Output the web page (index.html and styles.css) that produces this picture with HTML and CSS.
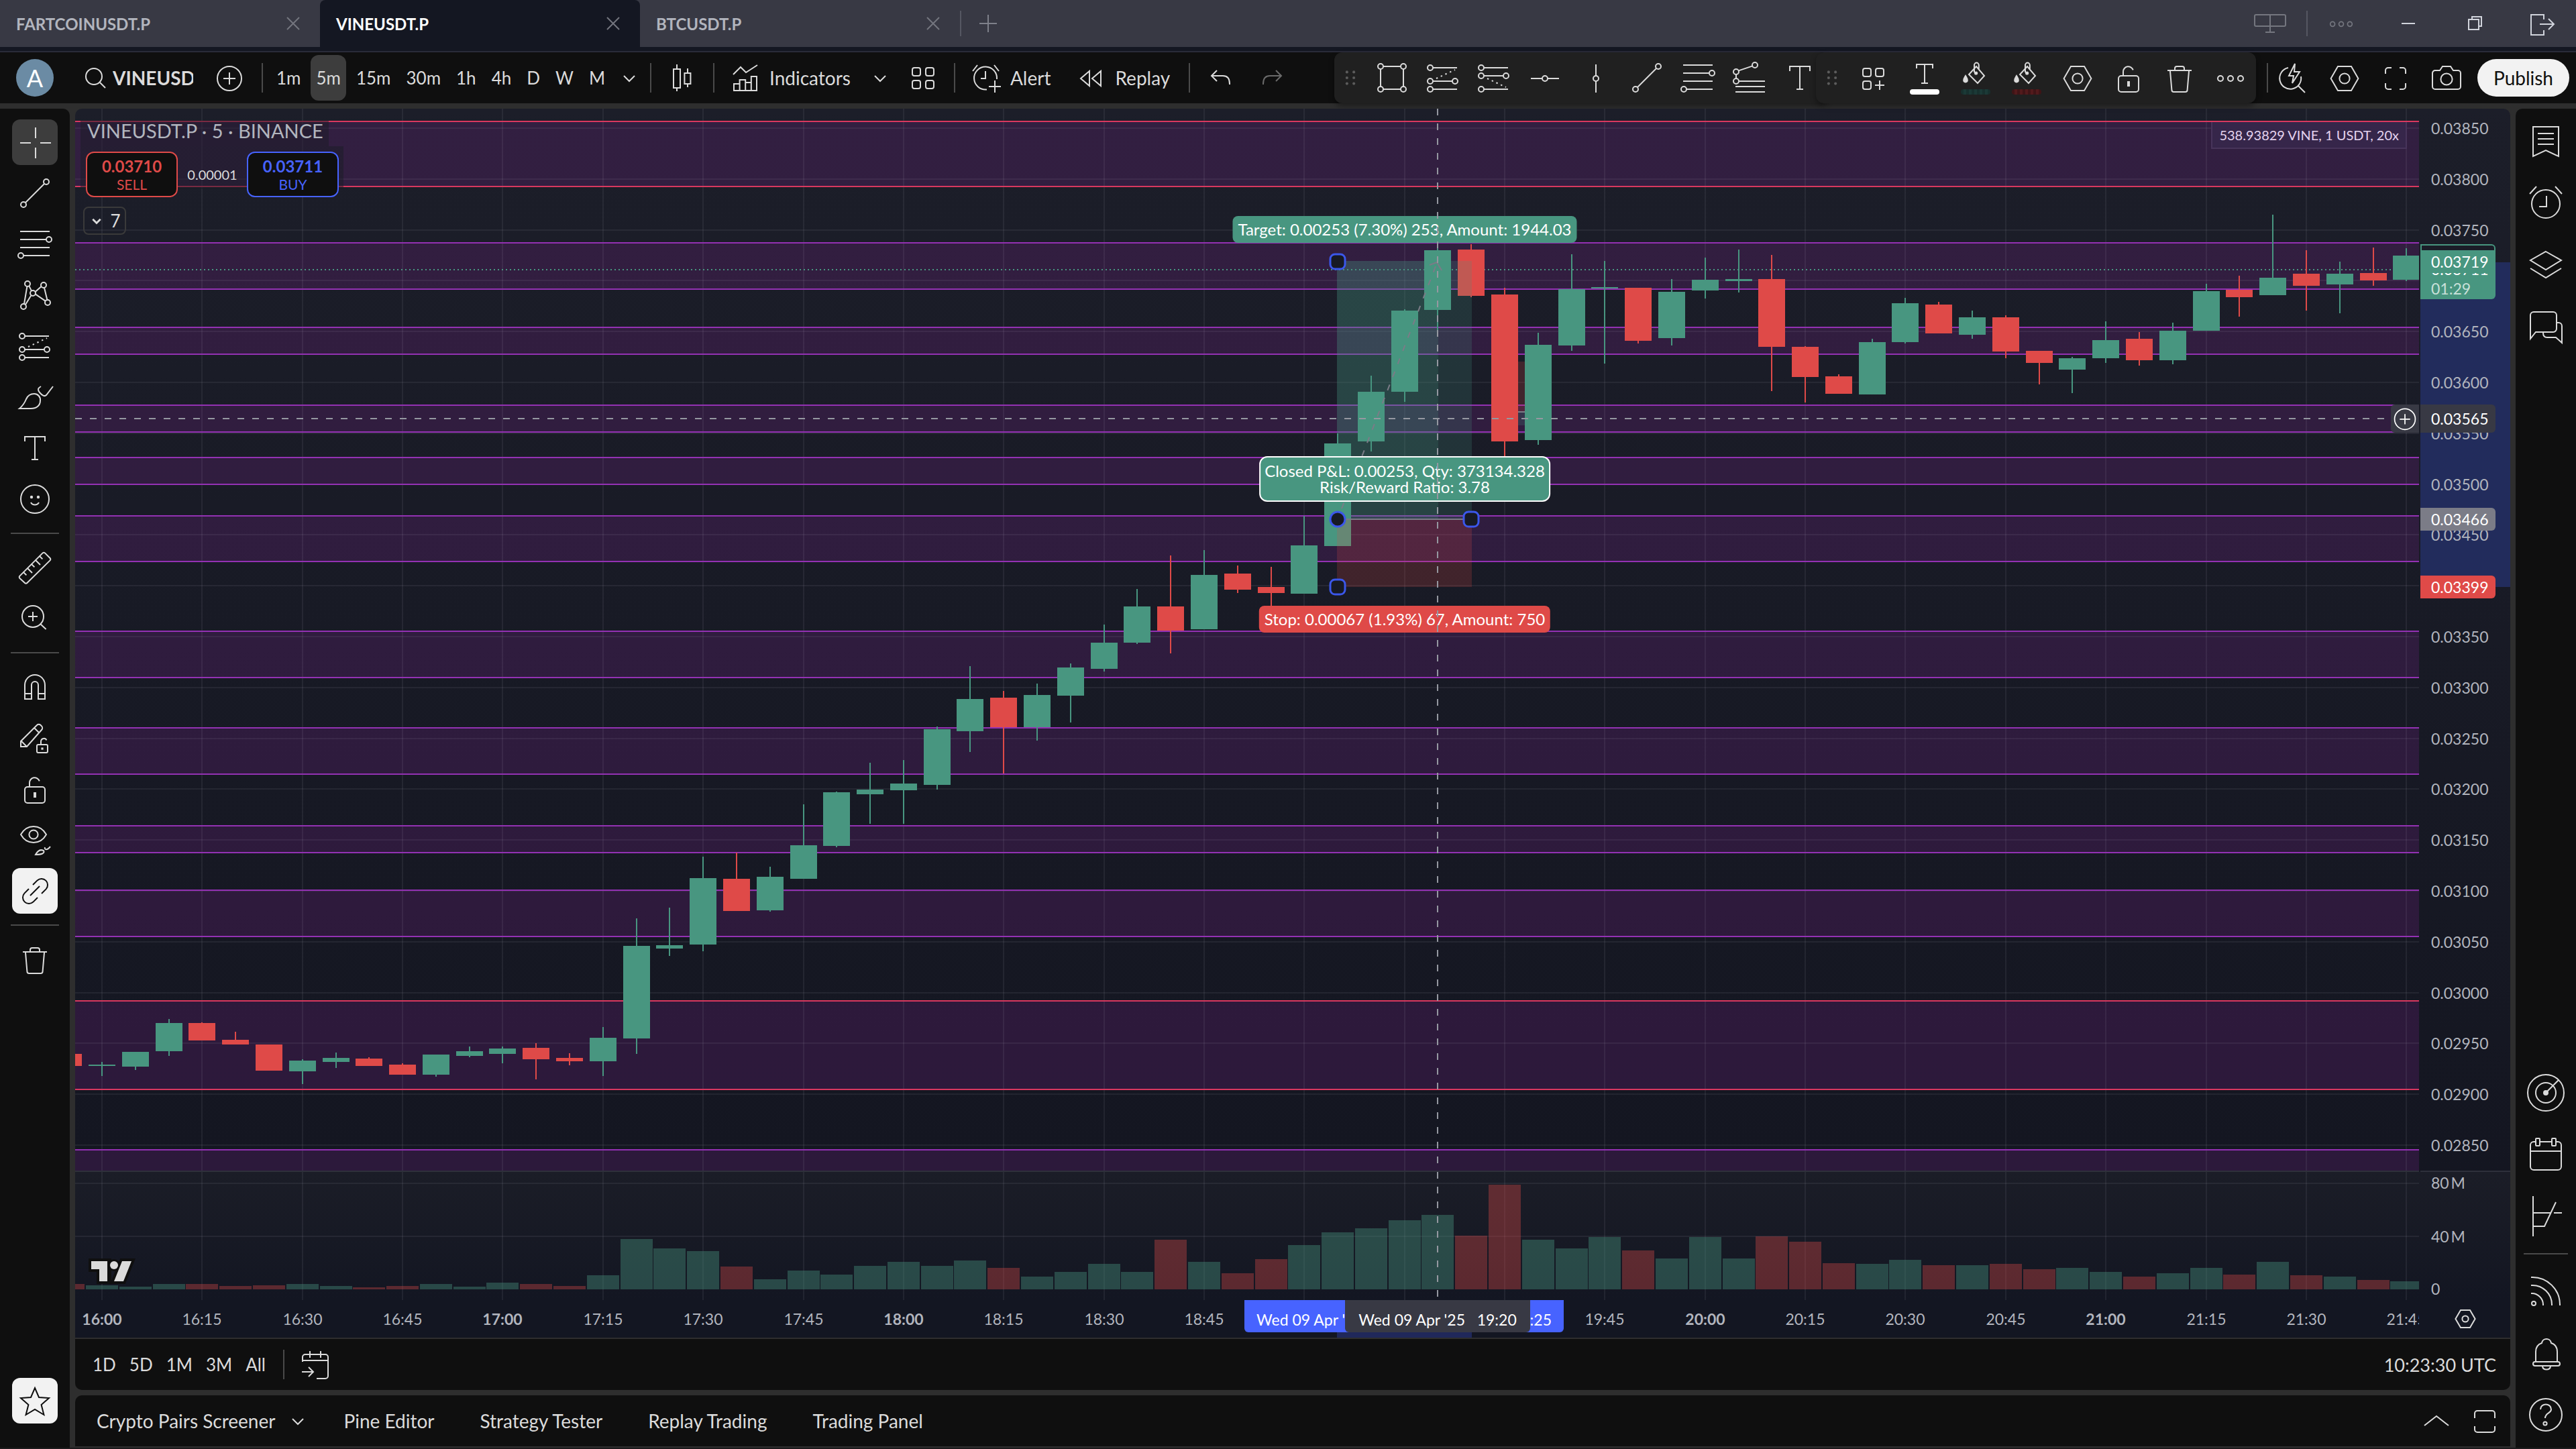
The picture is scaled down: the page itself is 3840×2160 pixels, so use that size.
FILE: index.html
```html
<!DOCTYPE html>
<html lang="en">
<head>
	<meta charset="UTF-8">
	<title>VINEUSDT.P</title>
	<link rel="stylesheet" href="styles.css">
</head>
<body>
	<!-- icon sprite -->
	<svg class="sprite" aria-hidden="true">
		<symbol id="close" viewBox="0 0 28 28"><path d="M9.5 9.5l9 9M18.5 9.5l-9 9"/></symbol>
		<symbol id="plus" viewBox="0 0 28 28"><path d="M14 7.5v13M7.5 14h13"/></symbol>
		<symbol id="layouts" viewBox="0 0 28 28"><rect x="2.500" y="7.500" width="23" height="8.500" rx="1"/><path d="M14 7.500v13M10.500 20.500h7"/></symbol>
		<symbol id="dots" viewBox="0 0 28 28"><circle cx="6.500" cy="14.500" r="2"/><circle cx="14" cy="14.500" r="2"/><circle cx="21.500" cy="14.500" r="2"/></symbol>
		<symbol id="minimize" viewBox="0 0 28 28"><path d="M9 14h10"/></symbol>
		<symbol id="restore" viewBox="0 0 28 28"><rect x="9" y="11" width="7.500" height="7.500"/><path d="M11.500 11V9h7v7h-2"/></symbol>
		<symbol id="exit" viewBox="0 0 28 28"><path d="M15 11V7.500H5.500v15H15V19M12 14.500h10M18.500 10.500l4 4-4 4"/></symbol>
		<symbol id="search" viewBox="0 0 28 28"><circle cx="13" cy="13" r="6"/><path d="M17.500 17.500l4 4"/></symbol>
		<symbol id="add" viewBox="0 0 28 28"><circle cx="14" cy="14.500" r="9"/><path d="M14 10v9M9.500 14.500h9"/></symbol>
		<symbol id="down" viewBox="0 0 28 28"><path d="M10 12.500l4 4 4-4"/></symbol>
		<symbol id="candles" viewBox="0 0 28 28"><path d="M10 4v3.500M10 21.500V24M18 7v3.500M18 18.500V21"/><rect x="7.500" y="7.500" width="5" height="14"/><rect x="15.700" y="10.500" width="4.500" height="8"/></symbol>
		<symbol id="indicators" viewBox="0 0 28 28"><path d="M5 11.500L10.500 6l4 4L23 4.500M5.500 23.500v-5h4.300v-3h4.300v2h4.300v-4.500h4.100v10.500zM9.800 18v5.500M14.100 17.500v6M18.400 17v6.500"/></symbol>
		<symbol id="grid" viewBox="0 0 28 28"><rect x="6" y="6.500" width="6" height="6" rx="1.500"/><rect x="16" y="6.500" width="6" height="6" rx="1.500"/><rect x="6" y="16" width="6" height="6" rx="1.500"/><rect x="16" y="16" width="6" height="6" rx="1.500"/></symbol>
		<symbol id="alert" viewBox="0 0 28 28"><path d="M14.500 22.700A8.500 8.500 0 1 1 22 15M13.500 9v5.500H10M4 9l3.500-4.500M23.500 9L20 4.500M20.500 16v9M16 20.500h9"/></symbol>
		<symbol id="replay" viewBox="0 0 28 28"><path d="M13 9v11l-6.500-5.500zM21.500 9v11L15 14.500z"/></symbol>
		<symbol id="undo" viewBox="0 0 28 28"><path d="M11 8.500l-4 4 4 4M7.500 12.500h8c3.500 0 5 2.500 5 6v.500"/></symbol>
		<symbol id="redo" viewBox="0 0 28 28"><path d="M17 8.500l4 4-4 4M20.500 12.500h-8c-3.500 0-5 2.500-5 6v.500"/></symbol>
		<symbol id="grip" viewBox="0 0 28 28"><g fill="#5c5c5c" stroke="none"><circle cx="11" cy="9" r="1.200"/><circle cx="17" cy="9" r="1.200"/><circle cx="11" cy="14" r="1.200"/><circle cx="17" cy="14" r="1.200"/><circle cx="11" cy="19" r="1.200"/><circle cx="17" cy="19" r="1.200"/></g></symbol>
		<symbol id="rectangle" viewBox="0 0 28 28"><path d="M7.500 5.500h13M7.500 22.500h13M5.500 7.500v13M22.500 7.500v13"/><circle cx="5.500" cy="5.500" r="2"/><circle cx="22.500" cy="5.500" r="2"/><circle cx="5.500" cy="22.500" r="2"/><circle cx="22.500" cy="22.500" r="2"/></symbol>
		<symbol id="long" viewBox="0 0 28 28"><circle cx="4.500" cy="6.500" r="2"/><circle cx="4.500" cy="16.500" r="2"/><circle cx="23" cy="16.500" r="2"/><circle cx="4.500" cy="22.500" r="2"/><path d="M6.500 6.500h18M6.500 16.500H21M6.500 22.500h18"/><path stroke-dasharray="1.200 2.500" d="M9 14.500l14-6.500"/></symbol>
		<symbol id="short" viewBox="0 0 28 28"><circle cx="4.500" cy="6.500" r="2"/><circle cx="4.500" cy="12.500" r="2"/><circle cx="23" cy="12.500" r="2"/><circle cx="4.500" cy="22.500" r="2"/><path d="M6.500 6.500h18M6.500 12.500H21M6.500 22.500h18"/><path stroke-dasharray="1.200 2.500" d="M9 14.500l14 6.500"/></symbol>
		<symbol id="hline" viewBox="0 0 28 28"><circle cx="14" cy="14.500" r="2"/><path d="M3.500 14.500H12M16 14.500h8.500"/></symbol>
		<symbol id="vline" viewBox="0 0 28 28"><circle cx="14" cy="14.500" r="2"/><path d="M14 4v8.500M14 16.500V25"/></symbol>
		<symbol id="trend" viewBox="0 0 28 28"><circle cx="5.500" cy="22.500" r="2"/><circle cx="22.500" cy="5.500" r="2"/><path d="M7 21L21 7"/></symbol>
		<symbol id="fib" viewBox="0 0 28 28"><path d="M3 4.500h22M3 10.500h19.500M3 16.500h22M5 22.500h20"/><circle cx="24.500" cy="10.500" r="2"/><circle cx="3.500" cy="22.500" r="2"/></symbol>
		<symbol id="fibext" viewBox="0 0 28 28"><circle cx="18.500" cy="4.500" r="2"/><circle cx="4.500" cy="9.500" r="2"/><circle cx="4.500" cy="16.500" r="2"/><path d="M6.300 8.700l10.400-3.500M4.500 11.500v3M6.500 16.500H26M4 20.500h22M4 24.500h22"/></symbol>
		<symbol id="text" viewBox="0 0 28 28"><path d="M6.500 9V5.500h15V9M14 5.500v17M11.500 22.500h5"/></symbol>
		<symbol id="gridplus" viewBox="0 0 28 28"><rect x="6" y="7" width="6" height="6" rx="1.500"/><rect x="15.500" y="7" width="6" height="6" rx="1.500"/><rect x="6" y="16.500" width="6" height="6" rx="1.500"/><path d="M18.500 16v7M15 19.500h7"/></symbol>
		<symbol id="textcolor" viewBox="0 0 28 28"><path d="M8 7V4h12v3M14 4v14M11.500 18h5"/></symbol>
		<symbol id="bucket" viewBox="0 0 28 28"><path d="M9 11.500L14.500 5.500l6 7-5 5.500zM13 10V4.500a1.700 1.700 0 0 1 3.400 0V8"/><circle class="solid" cx="14.300" cy="10.500" r=".8"/><path class="solid" d="M6.500 12.500c-.9 1.500-1.400 2.200-1.400 3.300a1.400 1.400 0 0 0 2.800 0c0-1.100-.5-1.800-1.400-3.300z"/></symbol>
		<symbol id="hex" viewBox="0 0 28 28"><path d="M9 5.500h10l5.200 9-5.200 9H9l-5.200-9z"/><circle cx="14" cy="14.500" r="3.800"/></symbol>
		<symbol id="hexsmall" viewBox="0 0 28 28"><path d="M10.500 7.500h7l3.800 6.500-3.800 6.500h-7L6.700 14z"/><circle cx="14" cy="14" r="2.300"/></symbol>
		<symbol id="unlock" viewBox="0 0 28 28"><rect x="6.500" y="12.500" width="15" height="12" rx="2"/><path d="M10 12.500V9.500a3.800 3.800 0 0 1 7.400-1.300"/><rect class="solid" x="13.500" y="17" width="1" height="3"/></symbol>
		<symbol id="trash" viewBox="0 0 28 28"><path d="M5 8.500h18M10.500 8.500V7A1.500 1.500 0 0 1 12 5.500h4A1.500 1.500 0 0 1 17.500 7v1.500M7 9l1.200 14a1.500 1.500 0 0 0 1.500 1.500h8.600a1.500 1.500 0 0 0 1.500-1.500L21 9"/></symbol>
		<symbol id="quick" viewBox="0 0 28 28"><path d="M10 6.500a8 8 0 1 0 9.500 6.500M17.500 20l5 5M15 3.500l-4.500 9H14L13 18l5.500-8.500h-4z"/></symbol>
		<symbol id="expand" viewBox="0 0 28 28"><path d="M6.500 11V8.500a2 2 0 0 1 2-2H11M17 6.500h2.500a2 2 0 0 1 2 2V11M21.500 18v2.500a2 2 0 0 1-2 2H17M11 22.500H8.500a2 2 0 0 1-2-2V18"/></symbol>
		<symbol id="camera" viewBox="0 0 28 28"><path d="M5.500 8.500H9L11 5.500h6l2 3h3.500a2 2 0 0 1 2 2v10a2 2 0 0 1-2 2h-17a2 2 0 0 1-2-2v-10a2 2 0 0 1 2-2z"/><circle cx="14" cy="15" r="4.300"/></symbol>
		<symbol id="cross" viewBox="0 0 28 28"><path d="M14.500 3v8M14.500 18v8M3 14.500h8M18 14.500h8"/></symbol>
		<symbol id="pattern" viewBox="0 0 28 28"><path d="M8.200 7.500L6 20.500M9.700 7.200l1.800 3.600M7 21l4.300-7M14.300 11.500L18.800 7.500M14.500 13.300l7.300 5M21 8.500l2.200 9"/><circle cx="8.500" cy="5.500" r="2"/><circle cx="20.500" cy="6.500" r="2"/><circle cx="12.500" cy="12.500" r="2"/><circle cx="5.500" cy="22.500" r="2"/><circle cx="23.500" cy="19.500" r="2"/></symbol>
		<symbol id="brush" viewBox="0 0 28 28"><path d="M2.500 22.500c3-2.500 4-4.500 5-7 1.200-2.800 3.500-4 6-4a4.500 4.500 0 0 1 4.500 5c0 4-3 6-7 6zM18.500 6c-2.500 1.500-2.500 2.500-1 4.500 1.500 1.700 3.500 3.500 5 2L27.500 6"/></symbol>
		<symbol id="smile" viewBox="0 0 28 28"><circle cx="14" cy="14" r="10.500"/><circle class="solid" cx="11.500" cy="12.500" r=".6"/><circle class="solid" cx="16.500" cy="12.500" r=".6"/><path d="M11 16.500c1.200 2.300 4.800 2.300 6 0"/></symbol>
		<symbol id="ruler" viewBox="0 0 28 28"><path d="M2.700 20.300L19.800 3.200a1.200 1.200 0 0 1 1.700 0l3.800 3.800a1.200 1.200 0 0 1 0 1.700L8.200 25.500a1.200 1.200 0 0 1-1.700 0l-3.800-3.500a1.200 1.200 0 0 1 0-1.700zM5.500 17.500l2.200 2.200M8.500 14.500l3.500 3.500M11.500 11.500l2.200 2.200M14.500 8.500l3.500 3.500M17.500 5.500l2.200 2.200"/></symbol>
		<symbol id="zoomin" viewBox="0 0 28 28"><circle cx="12.500" cy="12.500" r="8"/><path d="M12.500 9v7M9 12.500h7M18.300 18.300l4 3.700"/></symbol>
		<symbol id="magnet" viewBox="0 0 28 28"><path d="M6.500 23V12.500a7.500 7.500 0 0 1 15 0V23h-5V12.500a2.500 2.500 0 0 0-5 0V23zM6.500 19h5M16.500 19h5"/></symbol>
		<symbol id="pencillock" viewBox="0 0 28 28"><path d="M3.500 20.500v-4L15.500 4.500a2 2 0 0 1 2.800 0l.7.700a2 2 0 0 1 0 2.800L8 20.500zM13.500 6.500l4 4M4 16.500l4 4M18.500 19v-2.500a2.200 2.200 0 0 1 4.200-.8"/><rect x="15.500" y="19" width="8" height="6" rx="1"/><rect class="solid" x="19.200" y="21.700" width=".6" height=".6"/></symbol>
		<symbol id="eyebrush" viewBox="0 0 28 28"><path d="M3.500 10C8 2 18 2 22.500 10c-4.500 8-14.500 8-19 0zM14.500 25c2-3.500 4-4 6-3 1 2-1.500 3-6 3zM21.500 19.500c-.5 2 1.500 2.500 4-.5"/><circle cx="13" cy="10" r="3.300"/></symbol>
		<symbol id="link" viewBox="0 0 28 28"><path d="M12.500 9.500l3.300-3.300a4.600 4.600 0 0 1 6.500 6.500L19 16M9.500 12.500l-3.300 3.300a4.600 4.600 0 0 0 6.500 6.500L16 19M10.500 17.500l7-7"/></symbol>
		<symbol id="star" viewBox="0 0 28 28"><path d="M14 3.500l3 7 7.500.500-5.700 5 1.900 7.500L14 19.500 7.300 23.500 9.200 16l-5.700-5 7.500-.5z"/></symbol>
		<symbol id="goto" viewBox="0 0 28 28"><path d="M4.500 12V8.500a2 2 0 0 1 2-2h15a2 2 0 0 1 2 2v14a2 2 0 0 1-2 2H15M4.500 11h19M10 4v5M18 4v5M4 19.500h8.500M9 16l3.500 3.500L9 23"/></symbol>
		<symbol id="up" viewBox="0 0 28 28"><path d="M5 17.500l9-7 9 7"/></symbol>
		<symbol id="maximize" viewBox="0 0 28 28"><path d="M6.500 12V8.500a2 2 0 0 1 2-2h11a2 2 0 0 1 2 2V12M6.500 18v2.500a2 2 0 0 0 2 2h11a2 2 0 0 0 2-2V18"/></symbol>
		<symbol id="watchlist" viewBox="0 0 44 44"><path d="M12.500 11h19v22l-9.500-4.500-9.500 4.500zM16 16h12M16 20h12M16 24h12"/></symbol>
		<symbol id="alarm" viewBox="0 0 44 44"><circle cx="22" cy="22.500" r="10.500"/><path d="M22.500 16.500v8H17M10 15l5-5.500M34 15l-5-5.500"/></symbol>
		<symbol id="layers" viewBox="0 0 44 44"><path d="M22 12l11.500 6.500L22 25.500l-11.500-7zM10.500 24.500L22 31.500l11.500-7"/></symbol>
		<symbol id="chat" viewBox="0 0 44 44"><path d="M10.500 31V13.500a2.500 2.500 0 0 1 2.500-2.500h14.500a2.500 2.500 0 0 1 2.500 2.500v10a2.500 2.500 0 0 1-2.500 2.500H14.500zM20 26.500c0 2.500 1 3.500 3 3.500h6.500l4.500 4V21.500a2.500 2.500 0 0 0-2.500-2.500H30"/></symbol>
		<symbol id="target" viewBox="0 0 44 44"><circle cx="22" cy="22" r="13.500"/><circle cx="22" cy="22" r="7.500"/><circle class="solid" cx="22" cy="22" r="1.500"/><path d="M22 22l9.500-9.500"/></symbol>
		<symbol id="calendar" viewBox="0 0 44 44"><path d="M14 12.500h-1a2.500 2.500 0 0 0-2.500 2.500v16a2.500 2.500 0 0 0 2.500 2.500h18a2.500 2.500 0 0 0 2.500-2.500V15a2.500 2.500 0 0 0-2.500-2.500h-1M18 12.500h8M10.500 19.500h23"/><rect x="14.500" y="10" width="3" height="5.500" rx=".5"/><rect x="26.500" y="10" width="3" height="5.500" rx=".5"/></symbol>
		<symbol id="slope" viewBox="0 0 44 44"><path d="M12.500 7v30M12.500 19.500h13.500M28 19.500h6M12.500 29.500H21l8.500-18"/></symbol>
		<symbol id="stream" viewBox="0 0 44 44"><circle cx="13" cy="31" r="1.500"/><path d="M11 23.500a8.500 8.500 0 0 1 9 9M11 17.500a14.500 14.500 0 0 1 15.500 15M11 11.500a20.500 20.500 0 0 1 21.500 21"/></symbol>
		<symbol id="bell" viewBox="0 0 44 44"><path d="M14.500 28.500V21c0-3 1.500-5.500 4.500-6.500.5-4 6.500-4 7 0 3 1 4.500 3.500 4.500 6.500v7.500M19.500 32c.5 3 5.500 3 6 0"/><rect x="12.500" y="28.500" width="20" height="3" rx="1.500"/></symbol>
		<symbol id="help" viewBox="0 0 44 44"><circle cx="22" cy="22" r="12"/><path d="M18 18c0-5 8-5 8 0 0 3-4.500 2.500-4.500 6.500"/><circle cx="21.500" cy="28.500" r="1.300"/></symbol>
	</svg>

	<header class="tabbar">
		<div class="tab"><a href="#">FARTCOINUSDT.P</a><button aria-label="Close tab"><svg class="icon"><use href="#close"/></svg></button></div>
		<div class="tab active"><a href="#">VINEUSDT.P</a><button aria-label="Close tab"><svg class="icon"><use href="#close"/></svg></button></div>
		<div class="tab"><a href="#">BTCUSDT.P</a><button aria-label="Close tab"><svg class="icon"><use href="#close"/></svg></button></div>
		<span class="tab-sep"></span>
		<button class="new-tab" aria-label="New tab"><svg class="icon"><use href="#plus"/></svg></button>
		<div class="window-tools">
			<button class="dim layouts" aria-label="Layouts"><svg class="icon"><use href="#layouts"/></svg></button>
			<span class="tab-sep"></span>
			<button class="dim" aria-label="More"><svg class="icon small"><use href="#dots"/></svg></button>
			<button aria-label="Minimize"><svg class="icon"><use href="#minimize"/></svg></button>
			<button aria-label="Restore"><svg class="icon"><use href="#restore"/></svg></button>
			<button aria-label="Exit"><svg class="icon"><use href="#exit"/></svg></button>
		</div>
	</header>

	<nav class="topbar">
		<button class="avatar" aria-label="Account">A</button>
		<button class="symbol"><svg class="icon"><use href="#search"/></svg><span>VINEUSDT.P</span></button>
		<button class="tool" aria-label="Compare"><svg class="icon"><use href="#add"/></svg></button>
		<span class="sep"></span>
		<div class="intervals">
			<button>1m</button><button class="selected">5m</button><button>15m</button><button>30m</button><button>1h</button><button>4h</button><button>D</button><button>W</button><button>M</button>
			<button class="more" aria-label="More intervals"><svg class="icon"><use href="#down"/></svg></button>
		</div>
		<span class="sep"></span>
		<button class="tool wide" aria-label="Chart type"><svg class="icon"><use href="#candles"/></svg></button>
		<span class="sep"></span>
		<button class="labelled indicators"><svg class="icon"><use href="#indicators"/></svg>Indicators</button>
		<button class="tool slim" aria-label="Favourites"><svg class="icon"><use href="#down"/></svg></button>
		<button class="tool slim templates" aria-label="Templates"><svg class="icon"><use href="#grid"/></svg></button>
		<span class="sep"></span>
		<button class="labelled"><svg class="icon"><use href="#alert"/></svg>Alert</button>
		<button class="labelled replay"><svg class="icon"><use href="#replay"/></svg>Replay</button>
		<span class="sep"></span>
		<button class="tool undo" aria-label="Undo"><svg class="icon"><use href="#undo"/></svg></button>
		<button class="tool faded" aria-label="Redo"><svg class="icon"><use href="#redo"/></svg></button>

		<div class="topbar-right">
			<div class="floating drawing">
				<svg class="icon grip"><use href="#grip"/></svg>
				<button class="tool" aria-label="Rectangle"><svg class="icon"><use href="#rectangle"/></svg></button>
				<button class="tool" aria-label="Long position"><svg class="icon"><use href="#long"/></svg></button>
				<button class="tool" aria-label="Short position"><svg class="icon"><use href="#short"/></svg></button>
				<button class="tool" aria-label="Horizontal line"><svg class="icon"><use href="#hline"/></svg></button>
				<button class="tool" aria-label="Vertical line"><svg class="icon"><use href="#vline"/></svg></button>
				<button class="tool" aria-label="Trend line"><svg class="icon"><use href="#trend"/></svg></button>
				<button class="tool" aria-label="Fib retracement"><svg class="icon"><use href="#fib"/></svg></button>
				<button class="tool" aria-label="Fib extension"><svg class="icon"><use href="#fibext"/></svg></button>
				<button class="tool" aria-label="Text"><svg class="icon"><use href="#text"/></svg></button>
			</div>
			<div class="floating props">
				<svg class="icon grip"><use href="#grip"/></svg>
				<button class="tool" aria-label="Templates"><svg class="icon"><use href="#gridplus"/></svg></button>
				<button class="tool" aria-label="Text colour"><svg class="icon"><use href="#textcolor"/></svg><i class="swatch white"></i></button>
				<button class="tool" aria-label="Target colour"><svg class="icon"><use href="#bucket"/></svg><i class="swatch green"></i></button>
				<button class="tool" aria-label="Stop colour"><svg class="icon"><use href="#bucket"/></svg><i class="swatch red"></i></button>
				<button class="tool" aria-label="Settings"><svg class="icon"><use href="#hex"/></svg></button>
				<button class="tool" aria-label="Lock"><svg class="icon"><use href="#unlock"/></svg></button>
				<button class="tool" aria-label="Remove"><svg class="icon"><use href="#trash"/></svg></button>
				<button class="tool" aria-label="More"><svg class="icon"><use href="#dots"/></svg></button>
			</div>
			<span class="sep"></span>
			<button class="tool" aria-label="Quick search"><svg class="icon"><use href="#quick"/></svg></button>
			<button class="tool" aria-label="Settings"><svg class="icon"><use href="#hex"/></svg></button>
			<button class="tool" aria-label="Fullscreen"><svg class="icon"><use href="#expand"/></svg></button>
			<button class="tool" aria-label="Snapshot"><svg class="icon"><use href="#camera"/></svg></button>
			<button class="publish">Publish</button>
		</div>
	</nav>

	<div class="workspace">
		<aside class="left">
			<button class="on" aria-label="Cross"><svg class="icon"><use href="#cross"/></svg></button>
			<button aria-label="Trend line"><svg class="icon"><use href="#trend"/></svg></button>
			<button aria-label="Fib"><svg class="icon"><use href="#fib"/></svg></button>
			<button aria-label="Patterns"><svg class="icon"><use href="#pattern"/></svg></button>
			<button aria-label="Projection"><svg class="icon"><use href="#long"/></svg></button>
			<button aria-label="Brush"><svg class="icon"><use href="#brush"/></svg></button>
			<button aria-label="Text"><svg class="icon"><use href="#text"/></svg></button>
			<button aria-label="Icons"><svg class="icon"><use href="#smile"/></svg></button>
			<hr>
			<button aria-label="Measure"><svg class="icon"><use href="#ruler"/></svg></button>
			<button aria-label="Zoom in"><svg class="icon"><use href="#zoomin"/></svg></button>
			<hr>
			<button aria-label="Magnet"><svg class="icon"><use href="#magnet"/></svg></button>
			<button aria-label="Stay in drawing mode"><svg class="icon"><use href="#pencillock"/></svg></button>
			<button aria-label="Lock drawings"><svg class="icon"><use href="#unlock"/></svg></button>
			<button aria-label="Hide drawings"><svg class="icon"><use href="#eyebrush"/></svg></button>
			<button class="inverse" aria-label="Sync drawings"><svg class="icon"><use href="#link"/></svg></button>
			<hr>
			<button aria-label="Remove objects"><svg class="icon"><use href="#trash"/></svg></button>
			<button class="inverse last" aria-label="Favourites toolbar"><svg class="icon"><use href="#star"/></svg></button>
		</aside>

		<main>
			<section class="chart">
				<div class="plot">
					<svg id="plot"></svg>
					<div class="legend">
						<div class="legend-title">VINEUSDT.P · 5 · BINANCE</div>
						<div class="quote">
							<button class="sell"><b>0.03710</b>SELL</button>
							<span>0.00001</span>
							<button class="buy"><b>0.03711</b>BUY</button>
						</div>
						<button class="collapse"><svg class="icon"><use href="#down"/></svg>7</button>
					</div>
					<div class="holding">538.93829 VINE, 1 USDT, 20x</div>
					<div class="tag target">Target: 0.00253 (7.30%) 253, Amount: 1944.03</div>
					<div class="tag pnl">Closed P&amp;L: 0.00253, Qty: 373134.328<br>Risk/Reward Ratio: 3.78</div>
					<div class="tag stop">Stop: 0.00067 (1.93%) 67, Amount: 750</div>
					<div class="time-tag span"><span>Wed 09 Apr '</span><span>:25</span></div>
					<div class="time-tag now">Wed 09 Apr '25 &nbsp; 19:20</div>
					<svg id="overlay"></svg>
					<button class="add-at" aria-label="Add at price"><svg class="icon"><use href="#add"/></svg></button>
				</div>
				<div class="price-axis">
					<svg id="axis"></svg>
					<div class="price ask"></div>
					<div class="price last"><span>0.03711</span><span>01:29</span></div>
					<div class="price goal">0.03719</div>
					<div class="price cursor">0.03565</div>
					<div class="price entry">0.03466</div>
					<div class="price loss">0.03399</div>
					<button class="axis-settings" aria-label="Axis settings"><svg class="icon"><use href="#hexsmall"/></svg></button>
				</div>
			</section>
			<div class="rangebar">
				<button>1D</button><button>5D</button><button>1M</button><button>3M</button><button>All</button>
				<span class="sep"></span>
				<button aria-label="Go to"><svg class="icon"><use href="#goto"/></svg></button>
				<button class="clock">10:23:30 UTC</button>
			</div>
			<div class="panelbar">
				<button class="screener">Crypto Pairs Screener</button>
				<button class="screener-more" aria-label="Screeners"><svg class="icon"><use href="#down"/></svg></button>
				<button>Pine Editor</button>
				<button>Strategy Tester</button>
				<button>Replay Trading</button>
				<button>Trading Panel</button>
				<div class="panel-tools">
					<button aria-label="Open panel"><svg class="icon"><use href="#up"/></svg></button>
					<button aria-label="Maximize panel"><svg class="icon"><use href="#maximize"/></svg></button>
				</div>
			</div>
		</main>

		<aside class="right">
			<button aria-label="Watchlist"><svg class="icon big"><use href="#watchlist"/></svg></button>
			<button aria-label="Alerts"><svg class="icon big"><use href="#alarm"/></svg></button>
			<button aria-label="Object tree"><svg class="icon big"><use href="#layers"/></svg></button>
			<button aria-label="Chats"><svg class="icon big"><use href="#chat"/></svg></button>
			<button class="push" aria-label="Screeners"><svg class="icon big"><use href="#target"/></svg></button>
			<button aria-label="Calendar"><svg class="icon big"><use href="#calendar"/></svg></button>
			<button aria-label="Options"><svg class="icon big"><use href="#slope"/></svg></button>
			<hr>
			<button aria-label="Streams"><svg class="icon big"><use href="#stream"/></svg></button>
			<button aria-label="Notifications"><svg class="icon big"><use href="#bell"/></svg></button>
			<button aria-label="Help"><svg class="icon big"><use href="#help"/></svg></button>
		</aside>
	</div>
	<script src="script.js"></script>
</body>
</html>
```
FILE: styles.css
```css
*{box-sizing: border-box;margin: 0;padding: 0;}
body{display: flex;flex-direction: column;height: 100vh;overflow: hidden;background: #2e2e2e;color: #dbdbdb;font-family: Lato, "Open Sans", sans-serif;font-size: 28px;border-bottom: 2px solid #1c1a1c;}
button{border: 0;background: none;color: inherit;font: inherit;cursor: pointer;display: flex;align-items: center;justify-content: center;flex: none;}
a{color: inherit;text-decoration: none;}
hr{border: 0;height: 2px;flex: none;background: #4a4a4a;}
.sprite{position: absolute;width: 0;height: 0;}
.icon{width: 56px;height: 56px;flex: none;display: block;fill: none;stroke: currentColor;stroke-width: 1;}
.icon.big{width: 88px;height: 88px;}
.icon.small{width: 48px;height: 48px;}
.solid{fill: currentColor;}
.sep{width: 2px;height: 44px;flex: none;background: #4a4a4a;}

/* window tabs */
.tabbar{display: flex;align-items: center;height: 78px;flex: none;background: #383944;color: #b2b5be;border-bottom: 2px solid #2a2b39;box-shadow: inset 0 -6px #141722;padding-bottom: 6px;}
.tab{display: flex;align-items: center;justify-content: space-between;width: 477px;height: 70px;padding: 0 12px 0 24px;font-size: 24px;font-weight: 700;}
.tab .icon{color: #74767f;}
.tab.active{background: #141722;color: #fff;border-radius: 8px 8px 0 0;}
.tab-sep{width: 2px;height: 38px;background: #555762;}
.new-tab{margin-left: 12px;color: #7e808a;}
.window-tools{display: flex;align-items: center;margin-left: auto;color: #d1d4dc;}
.window-tools button{width: 100px;}
.window-tools .dim{color: #74767f;}
.window-tools .layouts{width: 108px;}

/* top toolbar */
.topbar{display: flex;align-items: center;height: 76px;flex: none;background: #0f0f0f;padding-left: 24px;}
.avatar{width: 56px;height: 56px;border-radius: 50%;background: #6b8ba4;color: #fff;font-size: 36px;margin-right: 34px;}
.symbol{font-weight: 700;margin-right: 16px;}
.symbol span{width: 120px;overflow: hidden;text-align: left;margin-left: -2px;}
.tool{width: 76px;height: 76px;position: relative;}
.symbol + .tool{margin-right: 10px;}
.faded{color: #6b6b6b;}
.intervals{display: flex;gap: 7px;padding: 0 3px 0 12px;font-size: 26px;}
.intervals button{height: 68px;padding: 0 8px;border-radius: 12px;}
.intervals .selected{background: #3d3d3d;}
.intervals .more{padding: 0;width: 56px;margin-left: -7px;}
.tool.wide{width: 92px;}
.tool.slim{width: 64px;}
.templates{margin-right: 14px;}
.labelled{padding-left: 18px;gap: 8px;}
.labelled.indicators{padding-right: 12px;}
.labelled.replay{padding: 0 28px 0 32px;}
.undo{margin-left: 8px;}
.topbar-right{display: flex;align-items: center;margin-left: auto;padding-right: 10px;}
.floating{display: flex;align-items: center;height: 76px;background: #202020;border-radius: 12px;box-shadow: 0 4px 8px rgba(0,0,0,.4);}
.floating .grip{width: 48px;}
.drawing{padding-right: 4px;margin-right: -18px;}
.props{position: relative;margin-right: 16px;}
.swatch{position: absolute;left: 16px;top: 55px;width: 44px;height: 8px;border-radius: 4px;}
.swatch.white{background: #fff;}
.swatch.green{background: repeating-linear-gradient(90deg,#17302e 0 4px,#1b3a37 4px 8px);}
.swatch.red{background: repeating-linear-gradient(90deg,#3f1416 0 4px,#521a1c 4px 8px);}
.publish{height: 56px;padding: 0 24px;margin-left: 8px;border-radius: 28px;background: #f2f2f2;color: #0f0f0f;}

/* workspace */
.workspace{display: flex;gap: 8px;flex: 1;min-height: 0;padding-top: 8px;}
.left{display: flex;flex-direction: column;align-items: center;width: 104px;flex: none;background: #0f0f0f;border-radius: 0 10px 0 0;padding: 16px 0 36px;}
.left button{width: 68px;height: 68px;margin-bottom: 8px;border-radius: 12px;}
.left hr{width: 72px;margin: 8px 0 16px;}
.left .on{background: #3d3d3d;}
.left .inverse{background: #f2f2f2;color: #0f0f0f;}
.left .last{margin: auto 0 0;}
.right{display: flex;flex-direction: column;align-items: center;width: 90px;flex: none;background: #0f0f0f;border-radius: 10px 0 0 0;padding: 3px 0;}
.right button{width: 90px;height: 92px;}
.right hr{width: 66px;margin: 9px 0;}
.right .push{margin-top: auto;}
main{display: flex;flex-direction: column;flex: 1;min-width: 0;padding-bottom: 2px;}
.rangebar,.panelbar{display: flex;align-items: center;height: 76px;flex: none;background: #0f0f0f;}
.rangebar{border-radius: 0 0 10px 10px;margin: 2px 0 8px;padding: 0 11px 0 16px;font-size: 26px;}
.rangebar button{padding: 0 10px;}
.rangebar .sep{margin: 0 8px 0 16px;}
.rangebar .clock{margin-left: auto;font-size: 27px;}
.panelbar{border-radius: 10px 10px 0 0;}
.panelbar button{padding: 0 34px;}
.panelbar .screener{padding: 0 0 0 32px;}
.panelbar .screener-more{padding: 0;width: 68px;}
.panel-tools{display: flex;margin-left: auto;padding-right: 2px;}
.panel-tools button{padding: 0;width: 72px;}

/* chart */
.chart{display: flex;flex: 1;min-height: 0;border-radius: 10px 10px 0 0;overflow: hidden;background: linear-gradient(#1c1e29,#141621 1584px,#1b1d27 1585px,#131622 1776px);font-size: 24px;}
.plot{position: relative;flex: 1;min-width: 0;overflow: hidden;margin-right: 2px;}
.plot > svg,.price-axis > svg{position: absolute;left: 0;top: 0;width: 100%;height: 100%;}
.plot text,.price-axis text{fill: #b2b5be;font-size: 23px;}
#overlay{pointer-events: none;}
.legend{position: absolute;left: 8px;top: 18px;}
.legend-title{width: 370px;padding: 0 0 8px 10px;background: rgba(25,28,37,.5);color: #b2b5be;font-size: 29px;line-height: 30px;white-space: nowrap;}
.quote{display: flex;align-items: center;justify-content: space-between;width: 392px;height: 84px;padding: 0 7px 0 8px;background: linear-gradient(rgba(25,28,37,.5) 64px,transparent 64px);}
.quote button{flex-direction: column;width: 137px;height: 68px;padding-top: 2px;border: 2px solid;border-radius: 12px;background: #0f0f0f;font-size: 21px;line-height: 27px;}
.quote b{font-size: 24px;}
.quote span{font-size: 20px;}
.sell{color: #df4a48;}
.buy{color: #4763ff;}
.collapse{width: 64px;height: 42px;margin: 6px 0 0 4px;padding-right: 8px;border: 2px solid #3a3a3a;border-radius: 8px;font-size: 26px;}
.collapse .icon{width: 40px;stroke-width: 2;}
.holding{position: absolute;right: 18px;top: 20px;padding: 0 10px;border: 2px solid #47345a;border-top: 0;background: #36264a;color: #e4d3ee;font-size: 20px;line-height: 38px;}
.tag{position: absolute;left: 1982px;transform: translateX(-50%);padding: 6px 8px;border-radius: 8px;color: #fff;line-height: 28px;text-align: center;white-space: nowrap;}
.target{top: 160px;background: #489680;}
.pnl{top: 518px;padding: 8px 6px;line-height: 24px;background: #489680;border: 2px solid #fff;border-radius: 12px;}
.stop{top: 741px;background: #df4a48;}
.time-tag{position: absolute;top: 1776px;height: 48px;line-height: 58px;padding: 0 18px;border-radius: 0 0 6px 6px;color: #fff;font-size: 23px;white-space: nowrap;}
.time-tag.span{display: flex;justify-content: space-between;left: 1743px;width: 476px;background: #4763ff;}
.time-tag.now{left: 1893px;width: 276px;background: #383944;text-align: center;}
.add-at{position: absolute;right: 0;top: 441px;width: 42px;height: 42px;background: #383944;border-radius: 6px 0 0 6px;color: #fff;}
.add-at .icon{width: 48px;height: 48px;}
.price-axis{position: relative;width: 134px;flex: none;}
.price{position: absolute;left: 0;width: 112px;padding-left: 16px;height: 34px;line-height: 34px;border-radius: 0 6px 6px 0;color: #fff;font-size: 23px;}
.price span{display: block;}
.ask{top: 202px;border: 2px solid #489680;}
.last{top: 221px;height: 63px;padding-top: 4px;line-height: 29px;background: #489680;}
.last span + span{color: #c8e0d9;}
.goal{top: 211px;background: #489680;border-radius: 0;}
.cursor{top: 441px;height: 42px;line-height: 42px;background: #383944;}
.entry{top: 595px;background: #7b7c87;}
.loss{top: 696px;background: #df4a48;}
.axis-settings{position: absolute;left: 39px;bottom: 0;}
```
FILE: script.js
```js
// chart origin inside the window
var OX = 112, OY = 162;
var STEP = 49.787, X0 = 152, FIRST = -1;
var UP = "#489680", DOWN = "#df4a48";
var RIGHT = 3606, PANE = 1746, BASE = 1922, AXIS = 1938;

// g/d, high, body top, body bottom, low, volume top
var bars = [
	["d",1571,1571,1589,1589,1914],
	["g",1583,1587,1589,1604,1916],
	["g",1568,1568,1590,1595,1918],
	["g",1519,1525,1567,1574,1914],
	["d",1524,1525,1551,1551,1914],
	["d",1538,1550,1557,1557,1917],
	["d",1557,1557,1596,1596,1916],
	["g",1579,1581,1597,1616,1914],
	["g",1569,1577,1583,1592,1917],
	["d",1576,1578,1589,1589,1919],
	["d",1585,1587,1602,1602,1917],
	["g",1572,1572,1602,1605,1914],
	["g",1560,1567,1574,1576,1918],
	["g",1560,1563,1571,1585,1912],
	["d",1555,1562,1579,1609,1914],
	["d",1570,1577,1582,1588,1917],
	["g",1531,1547,1582,1604,1901],
	["g",1369,1410,1548,1571,1847],
	["g",1353,1409,1414,1425,1861],
	["g",1277,1309,1408,1418,1865],
	["d",1271,1310,1358,1358,1888],
	["g",1292,1307,1357,1359,1907],
	["g",1199,1260,1310,1310,1894],
	["g",1180,1181,1261,1263,1900],
	["g",1137,1177,1184,1228,1887],
	["g",1133,1168,1178,1228,1881],
	["g",1083,1087,1170,1177,1887],
	["g",993,1042,1090,1121,1879],
	["d",1030,1040,1084,1153,1890],
	["g",1019,1036,1084,1104,1903],
	["g",989,995,1037,1077,1896],
	["g",931,958,997,1001,1884],
	["g",878,904,958,960,1896],
	["d",828,904,940,974,1848],
	["g",820,857,938,938,1881],
	["d",843,855,879,884,1898],
	["d",845,875,884,910,1877],
	["g",769,813,885,885,1856],
	["g",646,661,814,814,1837],
	["g",560,584,658,673,1831],
	["g",461,463,584,599,1819],
	["g",370,373,462,492,1811],
	["d",364,372,441,443,1842],
	["d",429,439,658,690,1766],
	["g",496,514,656,663,1848],
	["g",379,431,515,523,1861],
	["g",389,428,430,542,1844],
	["d",429,429,508,512,1864],
	["g",416,435,504,515,1876],
	["g",384,417,433,445,1844],
	["g",372,416,419,436,1876],
	["d",380,416,517,583,1843],
	["d",516,517,562,600,1851],
	["d",558,561,587,587,1883],
	["g",505,510,588,588,1884],
	["g",444,452,510,512,1878],
	["d",450,454,497,497,1886],
	["g",463,473,499,505,1886],
	["d",470,473,524,534,1884],
	["d",523,523,541,573,1892],
	["g",532,534,551,586,1890],
	["g",479,507,534,541,1896],
	["d",495,505,537,545,1903],
	["g",481,493,537,543,1898],
	["g",423,434,493,493,1890],
	["d",411,432,443,472,1900],
	["g",320,414,440,440,1881],
	["d",373,408,426,463,1901],
	["g",390,408,424,467,1903],
	["d",369,407,418,426,1908],
	["g",370,381,417,419,1910]
];

var zones = [
	[181,278,1],[362,431],[488,528],[604,644],[682,722],[769,837],[941,1010],
	[1085,1154],[1231,1271],[1327,1396],[1492,1624,1],[1714,0]
];

function rect(x, y, w, h, fill) {
	return '<rect x="' + Math.round(x) + '" y="' + y + '" width="' + w + '" height="' + h + '" fill="' + fill + '"/>';
}
function line(x1, y1, x2, y2, color, extra) {
	return '<path d="M' + x1 + ' ' + y1 + 'L' + x2 + ' ' + y2 + '" stroke="' + color + '" stroke-width="2" fill="none" ' + (extra || '') + '/>';
}
function draw(id, ox, html) {
	document.getElementById(id).innerHTML = '<g transform="translate(' + -ox + ' ' + -OY + ')">' + html + '</g>';
}
function priceY(i) {
	return Math.round(191 + i * 75.8);
}

var out = "", i, x, b, c;

// zones
zones.forEach(function (z) {
	out += rect(OX, z[0], RIGHT - OX, (z[1] || PANE) - z[0], "rgba(156,39,176,.18)");
});

// grid
var GRID = "rgba(200,200,220,.08)";
for (i = 0; i <= 20; i++) out += rect(OX, priceY(i) - 1, RIGHT - OX, 2, GRID);
for (i = 0; i < 24; i++) out += rect(X0 - 1 + i * STEP * 3, OY, 2, AXIS - OY, GRID);
[1764, 1843].forEach(function (y) { out += rect(OX, y - 1, RIGHT - OX, 2, GRID); });
out += rect(OX, PANE - 1, RIGHT - OX + 2, 2, "#2e303b");

zones.forEach(function (z) {
	c = z[2] ? "#d8385f" : "#9331b3";
	out += rect(OX, z[0] - 1, RIGHT - OX, 2, c);
	if (z[1]) out += rect(OX, z[1] - 1, RIGHT - OX, 2, c);
});
out += line(OX, 402, RIGHT, 402, UP, 'stroke-dasharray="2 4"');

// earlier closed position
out += rect(2224, 539, 49, 75, "rgba(223,74,72,.2)") + rect(2224, 614, 49, 20, "rgba(72,150,128,.2)") + rect(2224, 613, 49, 2, "#7b7c87");

// candles and volume
for (i = 0; i < bars.length; i++) {
	b = bars[i];
	x = Math.round(X0 + (i + FIRST) * STEP);
	c = b[0] === "g" ? UP : DOWN;
	out += rect(x - 1, b[1], 2, b[4] - b[1], c) + rect(x - 20, b[2], 40, b[3] - b[2], c);
	out += rect(x - 24, b[5], 48, BASE - b[5], b[0] === "g" ? "rgba(72,150,128,.4)" : "rgba(223,74,72,.36)");
}

// position
out += rect(1993, 389, 201, 385, "rgba(72,150,128,.2)") + rect(1993, 389, 151, 385, "rgba(72,150,128,.18)");
out += rect(1993, 774, 201, 101, "rgba(223,74,72,.2)") + rect(1993, 773, 201, 2, "#7b7c87");
out += line(2000, 758, 2142, 392, "#7b7c87", 'stroke-dasharray="9 12"') + line(2131, 395, 2142, 391, "#7b7c87") + line(2142, 391, 2149, 403, "#7b7c87");

// logo
out += '<g transform="translate(136 1880)"><path d="M0 0h26v30H12V12H0zM60 0H46L34 30h14z" fill="#0f0f0f" stroke="#0f0f0f" stroke-width="8"/>' +
	'<circle cx="34" cy="6" r="9" fill="#0f0f0f"/><path d="M0 0h24v30H12V12H0zM60 0H46L34 30h14z" fill="#dbdbdb"/><circle cx="34" cy="6" r="6" fill="#dbdbdb"/></g>';

// time axis, the crosshair label takes the place of 19:00 - 19:30
out += rect(1993, AXIS, 201, 56, "#20285a");
for (i = 0; i < 24; i++) {
	if (i > 11 && i < 15) continue;
	var m = 960 + i * 15;
	var t = Math.floor(m / 60) + ":" + ("0" + m % 60).slice(-2);
	out += '<text x="' + Math.round(X0 + i * STEP * 3) + '" y="1975" text-anchor="middle"' + (m % 60 ? '' : ' font-weight="700"') + '>' + t + '</text>';
}
draw("plot", OX, out);

// crosshair and handles
var DASH = 'stroke-dasharray="10 12"';
out = line(OX, 624, RIGHT, 624, "#9598a1", DASH) + line(2143, OY, 2143, PANE, "#9598a1", DASH) + line(2143, 1747, 2143, AXIS, "#9598a1", DASH);
[[1994,390,7],[1994,774,11],[2193,774,7],[1994,875,7]].forEach(function (h) {
	out += '<rect x="' + (h[0] - 11) + '" y="' + (h[1] - 11) + '" width="22" height="22" rx="' + h[2] + '" fill="#171a25" stroke="#3b57ea" stroke-width="3"/>';
});
draw("overlay", OX, out);

// price axis
out = rect(3608, 391, 134, 484, "#222c5c") + rect(3608, PANE - 1, 134, 2, "#2e303b");
for (i = 0; i <= 20; i++) {
	if (i === 3) continue;
	out += '<text x="3624" y="' + (priceY(i) + 9) + '">' + (0.0385 - i * 0.0005).toFixed(5) + '</text>';
}
out += '<text x="3624" y="1772">80\u2009M</text><text x="3624" y="1852">40\u2009M</text><text x="3624" y="1930">0</text>';
draw("axis", 3608, out);
```
